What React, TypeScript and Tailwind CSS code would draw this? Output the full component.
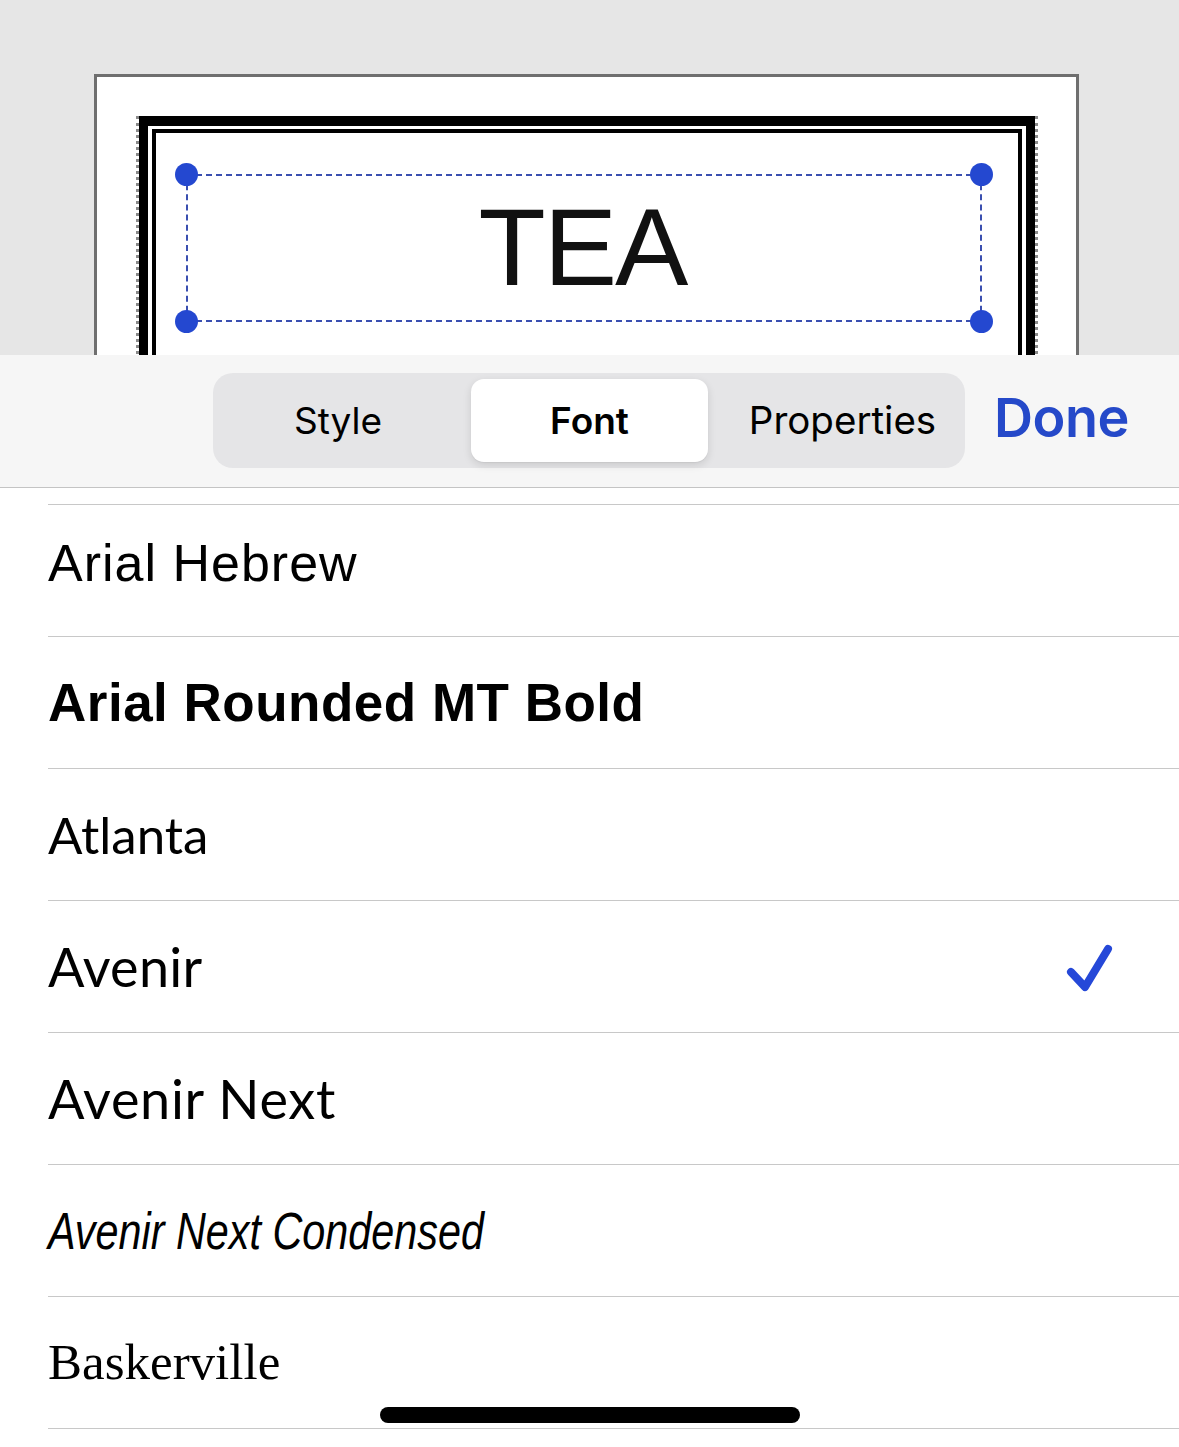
import React from "react";

const rows: { name: string; cls: string; checked?: boolean }[] = [
  { name: "Arial Hebrew", cls: "font-['Liberation_Sans',sans-serif] text-[52px] tracking-[1px] pb-4" },
  { name: "Arial Rounded MT Bold", cls: "font-['Liberation_Sans',sans-serif] font-bold text-[53px] tracking-[0.5px]" },
  { name: "Atlanta", cls: "font-['Lato',sans-serif] text-[51px]" },
  { name: "Avenir", cls: "font-['Lato',sans-serif] text-[54px] tracking-[0.3px]", checked: true },
  { name: "Avenir Next", cls: "font-['Lato',sans-serif] text-[54px] tracking-[0.7px]" },
  { name: "Avenir Next Condensed", cls: "font-['Liberation_Sans',sans-serif] italic text-[52px] origin-left scale-x-[0.795]" },
  { name: "Baskerville", cls: "font-['Liberation_Serif',serif] text-[51px]" },
];

export default function App() {
  return (
    <div className="w-[1179px] h-[1447px] overflow-hidden bg-white relative flex flex-col">
      {/* Canvas */}
      <div className="h-[355px] shrink-0 bg-[#e6e6e6] overflow-hidden pt-[74px] pl-[94px]">
        <div className="w-[985px] h-[400px] bg-white border-[3px] border-[#6f6f6f] pt-[39px] pl-[39px]">
          <div className="w-[902px] h-[400px] border-x-[3px] border-dotted border-x-[#8a8a8a]">
            <div className="h-full border-t-[10px] border-x-[9px] border-black pt-[3px] px-[4px]">
              <div className="h-full border-t-[4px] border-x-[4px] border-black pt-[41px] pl-[30px]">
                <div className="relative w-[796px] h-[148px] border-2 border-dashed border-[#3a4fb0] flex items-center justify-center">
                  <span className="font-['Liberation_Sans',sans-serif] text-[110px] leading-none text-[#111] tracking-[-2px] -ml-[3px] -mt-[3px]">
                    TEA
                  </span>
                  <span className="absolute -left-[13px] -top-[13px] w-[23px] h-[23px] rounded-full bg-[#2448d0]" />
                  <span className="absolute -right-[13px] -top-[13px] w-[23px] h-[23px] rounded-full bg-[#2448d0]" />
                  <span className="absolute -left-[13px] -bottom-[13px] w-[23px] h-[23px] rounded-full bg-[#2448d0]" />
                  <span className="absolute -right-[13px] -bottom-[13px] w-[23px] h-[23px] rounded-full bg-[#2448d0]" />
                </div>
              </div>
            </div>
          </div>
        </div>
      </div>

      {/* Toolbar */}
      <div className="h-[133px] shrink-0 bg-[#f6f6f6] border-b border-[#c4c4c4] flex items-start pt-[18px] pl-[213px] font-['Inter',sans-serif]">
        <div className="w-[752px] h-[95px] rounded-[20px] bg-[#e5e5e7] flex items-center px-[6px]">
          <div className="w-[238px] text-center text-[37px] text-black">Style</div>
          <div className="ml-[14px] w-[237px] h-[83px] rounded-[13px] bg-white shadow-[0_3px_8px_rgba(0,0,0,0.12),0_1px_1px_rgba(0,0,0,0.04)] flex items-center justify-center text-[37px] font-semibold text-black">
            Font
          </div>
          <div className="flex-1 pl-[18px] text-center text-[38.5px] text-black">Properties</div>
        </div>
        <div className="ml-[29px] mt-[18px] text-[54px] font-semibold text-[#2549c9] leading-none tracking-[-0.5px]">
          Done
        </div>
      </div>

      {/* List */}
      <div className="flex-1 pt-[16px]">
        {rows.map((r) => (
          <div key={r.name} className="ml-[48px] h-[132px] border-t border-[#c8c8c8] flex items-center">
            <div className="flex-1 flex items-center">
              <span className={`block text-black leading-none whitespace-nowrap ${r.cls}`}>{r.name}</span>
            </div>
            {r.checked && (
              <svg width="60" height="60" viewBox="0 0 60 60" className="mr-[58px]">
                <path d="M10 35 L24 50 L47 12" fill="none" stroke="#2548d8" strokeWidth="8" strokeLinecap="round" strokeLinejoin="round" />
              </svg>
            )}
          </div>
        ))}
        <div className="ml-[48px] border-t border-[#c8c8c8]" />
      </div>

      {/* Home indicator */}
      <div className="absolute left-[380px] top-[1407px] w-[420px] h-[16px] rounded-full bg-black" />
    </div>
  );
}
